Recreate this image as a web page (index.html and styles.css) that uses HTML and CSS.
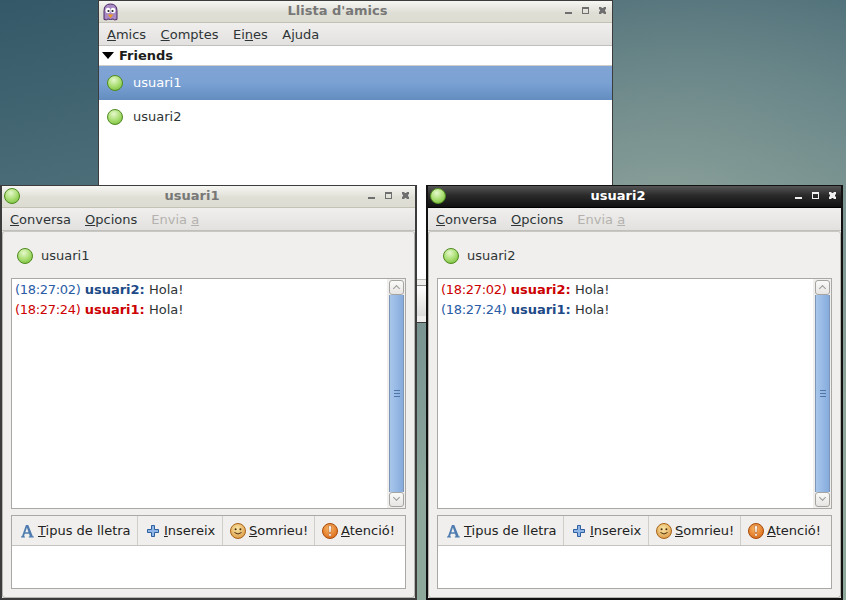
FILE: index.html
```html
<!DOCTYPE html>
<html lang="ca">
<head>
    <meta charset="UTF-8">
    <title>Pidgin</title>
    <link rel="stylesheet" href="styles.css">
</head>
<body>
    <svg class="defs" width="0" height="0">
        <defs>
            <radialGradient id="ledFill" cx="0.42" cy="0.3" r="0.8">
                <stop offset="0" stop-color="#e6f8cc"/>
                <stop offset="0.5" stop-color="#aee078"/>
                <stop offset="1" stop-color="#74bd36"/>
            </radialGradient>
            <radialGradient id="smileFill" cx="0.45" cy="0.35" r="0.75">
                <stop offset="0" stop-color="#fbe7a8"/>
                <stop offset="1" stop-color="#d9923a"/>
            </radialGradient>
            <radialGradient id="warnFill" cx="0.45" cy="0.35" r="0.75">
                <stop offset="0" stop-color="#f9b868"/>
                <stop offset="1" stop-color="#d9620f"/>
            </radialGradient>
            <symbol id="led" viewBox="0 0 16 16">
                <circle cx="8" cy="8" r="7.500" fill="url(#ledFill)" stroke="#4f8a1f" stroke-width="1"/>
            </symbol>
            <symbol id="closeIcon" viewBox="0 0 7 7">
                <path d="M0 0h2.500v1h2V0H7v2.500H6v2h1V7H4.500V6h-2v1H0V4.500h1v-2H0z" fill="currentColor"/>
            </symbol>
            <symbol id="fontIcon" viewBox="-1 -1 16 16">
                <path d="M1 13.500h4v-1l-1-.3.8-2.400h4.200l.8 2.400-1 .3v1h5v-1l-1-.3L8.300 1H5.900L2 12.200l-1 .3zM5.300 8.300l1.600-4.800 1.600 4.800z" fill="#4f7cb0"/>
            </symbol>
            <symbol id="plusIcon" viewBox="-1 -1 16 16">
                <path d="M4.500 .5h3v4h4v3h-4v4h-3v-4h-4v-3h4z" transform="translate(1 1)" fill="#8fb6e6" stroke="#2f5f9f" stroke-width="1"/>
            </symbol>
            <symbol id="smileIcon" viewBox="0 0 16 16">
                <circle cx="8" cy="8" r="7.500" fill="url(#smileFill)" stroke="#a8641c" stroke-width="1"/>
                <circle cx="5.600" cy="6.300" r="1" fill="#4a3010"/>
                <circle cx="10.400" cy="6.300" r="1" fill="#4a3010"/>
                <path d="M4.500 9.500q3.500 3 7 0" fill="none" stroke="#4a3010" stroke-width="1"/>
            </symbol>
            <symbol id="warnIcon" viewBox="0 0 16 16">
                <circle cx="8" cy="8" r="7.500" fill="url(#warnFill)" stroke="#a84c0c" stroke-width="1"/>
                <path d="M6.500 2.800h3l-.6 6.700H7.100z" fill="#fff" stroke="#a84c0c" stroke-width=".5"/>
                <circle cx="8" cy="11.900" r="1.400" fill="#fff" stroke="#a84c0c" stroke-width=".5"/>
            </symbol>
        </defs>
    </svg>

    <div class="window buddy-window">
        <div class="titlebar">
            <svg class="app-icon" width="17" height="18" viewBox="0 0 17 18">
                <path d="M2 16.500V8q0-7 6.500-7T15 8v8.500q-3 1-4-.5-2.500 1-5 0-1 1.500-4 .5z" fill="#a98ac4" stroke="#4c2a68"/>
                <ellipse cx="6" cy="7.500" rx="2.400" ry="2.700" fill="#fff"/>
                <ellipse cx="11" cy="7.500" rx="2.400" ry="2.700" fill="#fff"/>
                <circle cx="6.500" cy="8" r="1.100" fill="#222"/>
                <circle cx="10.500" cy="8" r="1.100" fill="#222"/>
                <path d="M5.500 11.500h6L8.500 15z" fill="#ef9a1f"/>
            </svg>
            <span class="title">Llista d'amics</span>
            <div class="controls">
                <span class="ctl-min"></span><span class="ctl-max"></span><svg class="ctl-close"><use href="#closeIcon"/></svg>
            </div>
        </div>
        <div class="menubar">
            <span><u>A</u>mics</span>
            <span><u>C</u>omptes</span>
            <span>Ei<u>n</u>es</span>
            <span>Ajuda</span>
        </div>
        <div class="buddy-list">
            <div class="group"><i class="arrow"></i>Friends</div>
            <div class="buddy selected"><svg class="led"><use href="#led"/></svg>usuari1</div>
            <div class="buddy"><svg class="led"><use href="#led"/></svg>usuari2</div>
        </div>
        <div class="status">
            <div class="status-box"></div>
        </div>
    </div>

    <div class="window chat-window chat-left">
        <div class="titlebar">
            <svg class="led win-led"><use href="#led"/></svg>
            <span class="title">usuari1</span>
            <div class="controls">
                <span class="ctl-min"></span><span class="ctl-max"></span><svg class="ctl-close"><use href="#closeIcon"/></svg>
            </div>
        </div>
        <div class="menubar">
            <span><u>C</u>onversa</span>
            <span><u>O</u>pcions</span>
            <span class="disabled">Envia <u>a</u></span>
        </div>
        <div class="chat-body">
            <div class="peer"><svg class="led"><use href="#led"/></svg>usuari1</div>
            <div class="log">
                <div class="messages">
                    <p><span class="blue"><span class="time">(18:27:02)</span> <b>usuari2:</b></span> Hola!</p>
                    <p><span class="red"><span class="time">(18:27:24)</span> <b>usuari1:</b></span> Hola!</p>
                </div>
                <div class="scrollbar">
                    <div class="step up"></div>
                    <div class="thumb"><i></i></div>
                    <div class="step down"></div>
                </div>
            </div>
            <div class="compose">
                <div class="toolbar">
                    <div class="tool tool-font"><svg class="icon"><use href="#fontIcon"/></svg><span><u>T</u>ipus de lletra</span></div>
                    <div class="tool tool-insert"><svg class="icon"><use href="#plusIcon"/></svg><span><u>I</u>nsereix</span></div>
                    <div class="tool tool-smile"><svg class="icon"><use href="#smileIcon"/></svg><span><u>S</u>omrieu!</span></div>
                    <div class="tool tool-warn"><svg class="icon"><use href="#warnIcon"/></svg><span><u>A</u>tenció!</span></div>
                </div>
                <div class="input"></div>
            </div>
        </div>
    </div>

    <div class="window chat-window chat-right focused">
        <div class="titlebar">
            <svg class="led win-led"><use href="#led"/></svg>
            <span class="title">usuari2</span>
            <div class="controls">
                <span class="ctl-min"></span><span class="ctl-max"></span><svg class="ctl-close"><use href="#closeIcon"/></svg>
            </div>
        </div>
        <div class="menubar">
            <span><u>C</u>onversa</span>
            <span><u>O</u>pcions</span>
            <span class="disabled">Envia <u>a</u></span>
        </div>
        <div class="chat-body">
            <div class="peer"><svg class="led"><use href="#led"/></svg>usuari2</div>
            <div class="log">
                <div class="messages">
                    <p><span class="red"><span class="time">(18:27:02)</span> <b>usuari2:</b></span> Hola!</p>
                    <p><span class="blue"><span class="time">(18:27:24)</span> <b>usuari1:</b></span> Hola!</p>
                </div>
                <div class="scrollbar">
                    <div class="step up"></div>
                    <div class="thumb"><i></i></div>
                    <div class="step down"></div>
                </div>
            </div>
            <div class="compose">
                <div class="toolbar">
                    <div class="tool tool-font"><svg class="icon"><use href="#fontIcon"/></svg><span><u>T</u>ipus de lletra</span></div>
                    <div class="tool tool-insert"><svg class="icon"><use href="#plusIcon"/></svg><span><u>I</u>nsereix</span></div>
                    <div class="tool tool-smile"><svg class="icon"><use href="#smileIcon"/></svg><span><u>S</u>omrieu!</span></div>
                    <div class="tool tool-warn"><svg class="icon"><use href="#warnIcon"/></svg><span><u>A</u>tenció!</span></div>
                </div>
                <div class="input"></div>
            </div>
        </div>
    </div>
</body>
</html>
```

FILE: styles.css
```css
html, body {
    margin: 0;
    height: 600px;
    overflow: hidden;
}
body {
    position: relative;
    font-family: "DejaVu Sans", sans-serif;
    font-size: 13px;
    color: #2e3436;
    background-color: #4b6b78;
    background-image:
        radial-gradient(ellipse 420px 340px at 660px 250px, #8fa39b 0%, rgba(143, 163, 155, 0) 100%),
        linear-gradient(168deg, #355868 0%, #557780 38%, #8fa89c 75%);
}
.defs {
    position: absolute;
}

/* windows sit on a free desktop */
.window {
    position: absolute;
    box-sizing: border-box;
    display: flex;
    flex-direction: column;
    background: #f0efed;
    border: 1px solid #3c3c3c;
}
.buddy-window {
    left: 98px;
    top: 0;
    width: 515px;
    height: 323px;
}
.chat-window {
    top: 185px;
    width: 417px;
    height: 415px;
    border-width: 1px 2px 2px 2px;
}
.chat-left {
    left: 0;
}
.chat-right {
    left: 426px;
    border-color: #111;
}

.titlebar {
    position: relative;
    display: flex;
    align-items: center;
    justify-content: center;
    flex: none;
    height: 21px;
    padding-right: 36px;
    background: linear-gradient(#f6f6f3, #e0dfd6 55%, #dddcd2);
    border-bottom: 1px solid #c3c2b4;
}
.chat-window .titlebar {
    padding-right: 33px;
}
.title {
    margin-bottom: 2px;
    font-weight: bold;
    color: #777;
}
.focused .titlebar {
    background: linear-gradient(#555, #2a2a2a 45%, #111);
    border-bottom-color: #000;
}
.focused .title {
    color: #fff;
}
.app-icon {
    position: absolute;
    left: 3px;
    top: 2px;
}
.led.win-led {
    position: absolute;
    left: 2px;
    top: 2px;
    margin: 0;
}
.controls {
    position: absolute;
    right: 6px;
    top: 6px;
    display: flex;
    gap: 10px;
    color: #6f6f6f;
}
.controls > * {
    display: block;
    box-sizing: border-box;
    width: 7px;
    height: 7px;
}
.ctl-min::after {
    content: "";
    display: block;
    height: 2px;
    margin-top: 5px;
    background: currentColor;
}
.ctl-max {
    border: 1px solid currentColor;
    border-top-width: 2px;
}
.focused .controls {
    right: 5px;
    color: #f0f0f0;
}

.menubar {
    display: flex;
    flex: none;
    gap: 14.5px;
    align-items: center;
    box-sizing: border-box;
    height: 23px;
    padding: 1px 8px 0 8px;
    background: linear-gradient(#f0efed, #e2e1df);
    border-bottom: 1px solid #bfbfbb;
}
.chat-window .menubar {
    gap: 14px;
    padding-top: 0;
}
.disabled {
    color: #b4b2ae;
}

.buddy-list {
    flex: 1;
    background: #fff;
}
.group {
    display: flex;
    align-items: center;
    box-sizing: border-box;
    height: 20px;
    padding-left: 3px;
    font-weight: bold;
    color: #1c1c1c;
    border-bottom: 1px solid #cfcec8;
}
.arrow {
    width: 0;
    height: 0;
    margin-right: 5px;
    border-left: 6px solid transparent;
    border-right: 6px solid transparent;
    border-top: 7px solid #000;
}
.buddy {
    display: flex;
    align-items: center;
    box-sizing: border-box;
    height: 34px;
    padding: 0 0 2px 8px;
}
.buddy.selected {
    background: linear-gradient(#80a4d4, #7ba1d3 50%, #638dc0);
    color: #fff;
}
.led {
    flex: none;
    width: 16px;
    height: 16px;
    margin: 2px 10px 0 0;
}
.status {
    flex: none;
    padding: 5px 0 6px;
    background: #f0efed;
    border-top: 1px solid #bdbcb8;
}
.status-box {
    height: 30px;
    background: linear-gradient(#fff, #dcdcda);
    border-top: 1px solid #8a8a86;
}

.chat-body {
    flex: 1;
    display: flex;
    flex-direction: column;
    padding: 0 8px;
    background: #f0efed;
    border: 1px solid #b6b5b0;
    border-top-color: #c8c7c2;
    border-radius: 3px;
}
.peer {
    display: flex;
    align-items: center;
    flex: none;
    height: 46px;
    padding-left: 6px;
}
.peer .led {
    margin-right: 8px;
}
.log {
    flex: none;
    display: flex;
    box-sizing: border-box;
    height: 231px;
    background: #fff;
    border: 1px solid #a9a8a4;
}
.messages {
    flex: 1;
    padding: 1px 3px;
}
.messages p {
    margin: 0;
    height: 20px;
    line-height: 20px;
}
.time {
    letter-spacing: -0.3px;
}
.blue {
    color: #2a5ca6;
}
.blue b {
    color: #204a87;
}
.red {
    color: #cc0000;
}
.scrollbar {
    flex: none;
    display: flex;
    flex-direction: column;
    width: 18px;
    box-sizing: border-box;
    padding: 1px 1px 1px 2px;
    background: #f0efed;
}
.step {
    flex: none;
    height: 15px;
    box-sizing: border-box;
    background: linear-gradient(#fafaf9, #e6e5e3);
    border: 1px solid #a5a4a0;
    border-radius: 3px;
    position: relative;
}
.step::after {
    content: "";
    position: absolute;
    left: 4px;
    width: 5px;
    height: 5px;
    box-sizing: border-box;
    border-left: 1px solid #9a9a96;
    border-top: 1px solid #9a9a96;
    transform: rotate(45deg);
    top: 5px;
}
.step.down::after {
    transform: rotate(225deg);
    top: 2px;
}
.thumb {
    flex: 1;
    display: flex;
    align-items: center;
    justify-content: center;
    background: linear-gradient(90deg, #a9c6ea, #9abce6 40%, #86abdc);
    border: 1px solid #7d96b8;
    border-width: 0 1px;
}
.thumb i {
    display: block;
    width: 6px;
    height: 8px;
    background: repeating-linear-gradient(#4f76a8 0 1px, transparent 1px 3px);
}

.compose {
    flex: none;
    display: flex;
    flex-direction: column;
    box-sizing: border-box;
    height: 74px;
    margin-top: 6px;
    border: 1px solid #a9a8a4;
    background: #fff;
}
.toolbar {
    display: flex;
    flex: none;
    box-sizing: border-box;
    height: 30px;
    background: #f0efed;
    border-bottom: 1px solid #c4c3bf;
}
.tool {
    display: flex;
    align-items: center;
    box-sizing: border-box;
    padding-left: 7px;
    border-right: 1px solid #cfcec9;
    color: #222;
}
.tool-font { width: 126px; }
.tool-insert { width: 85px; }
.tool-smile { width: 92px; }
.tool-warn { flex: 1; border-right: 0; }
.icon {
    flex: none;
    width: 16px;
    height: 16px;
    margin-right: 3px;
}
.input {
    flex: 1;
}
```
